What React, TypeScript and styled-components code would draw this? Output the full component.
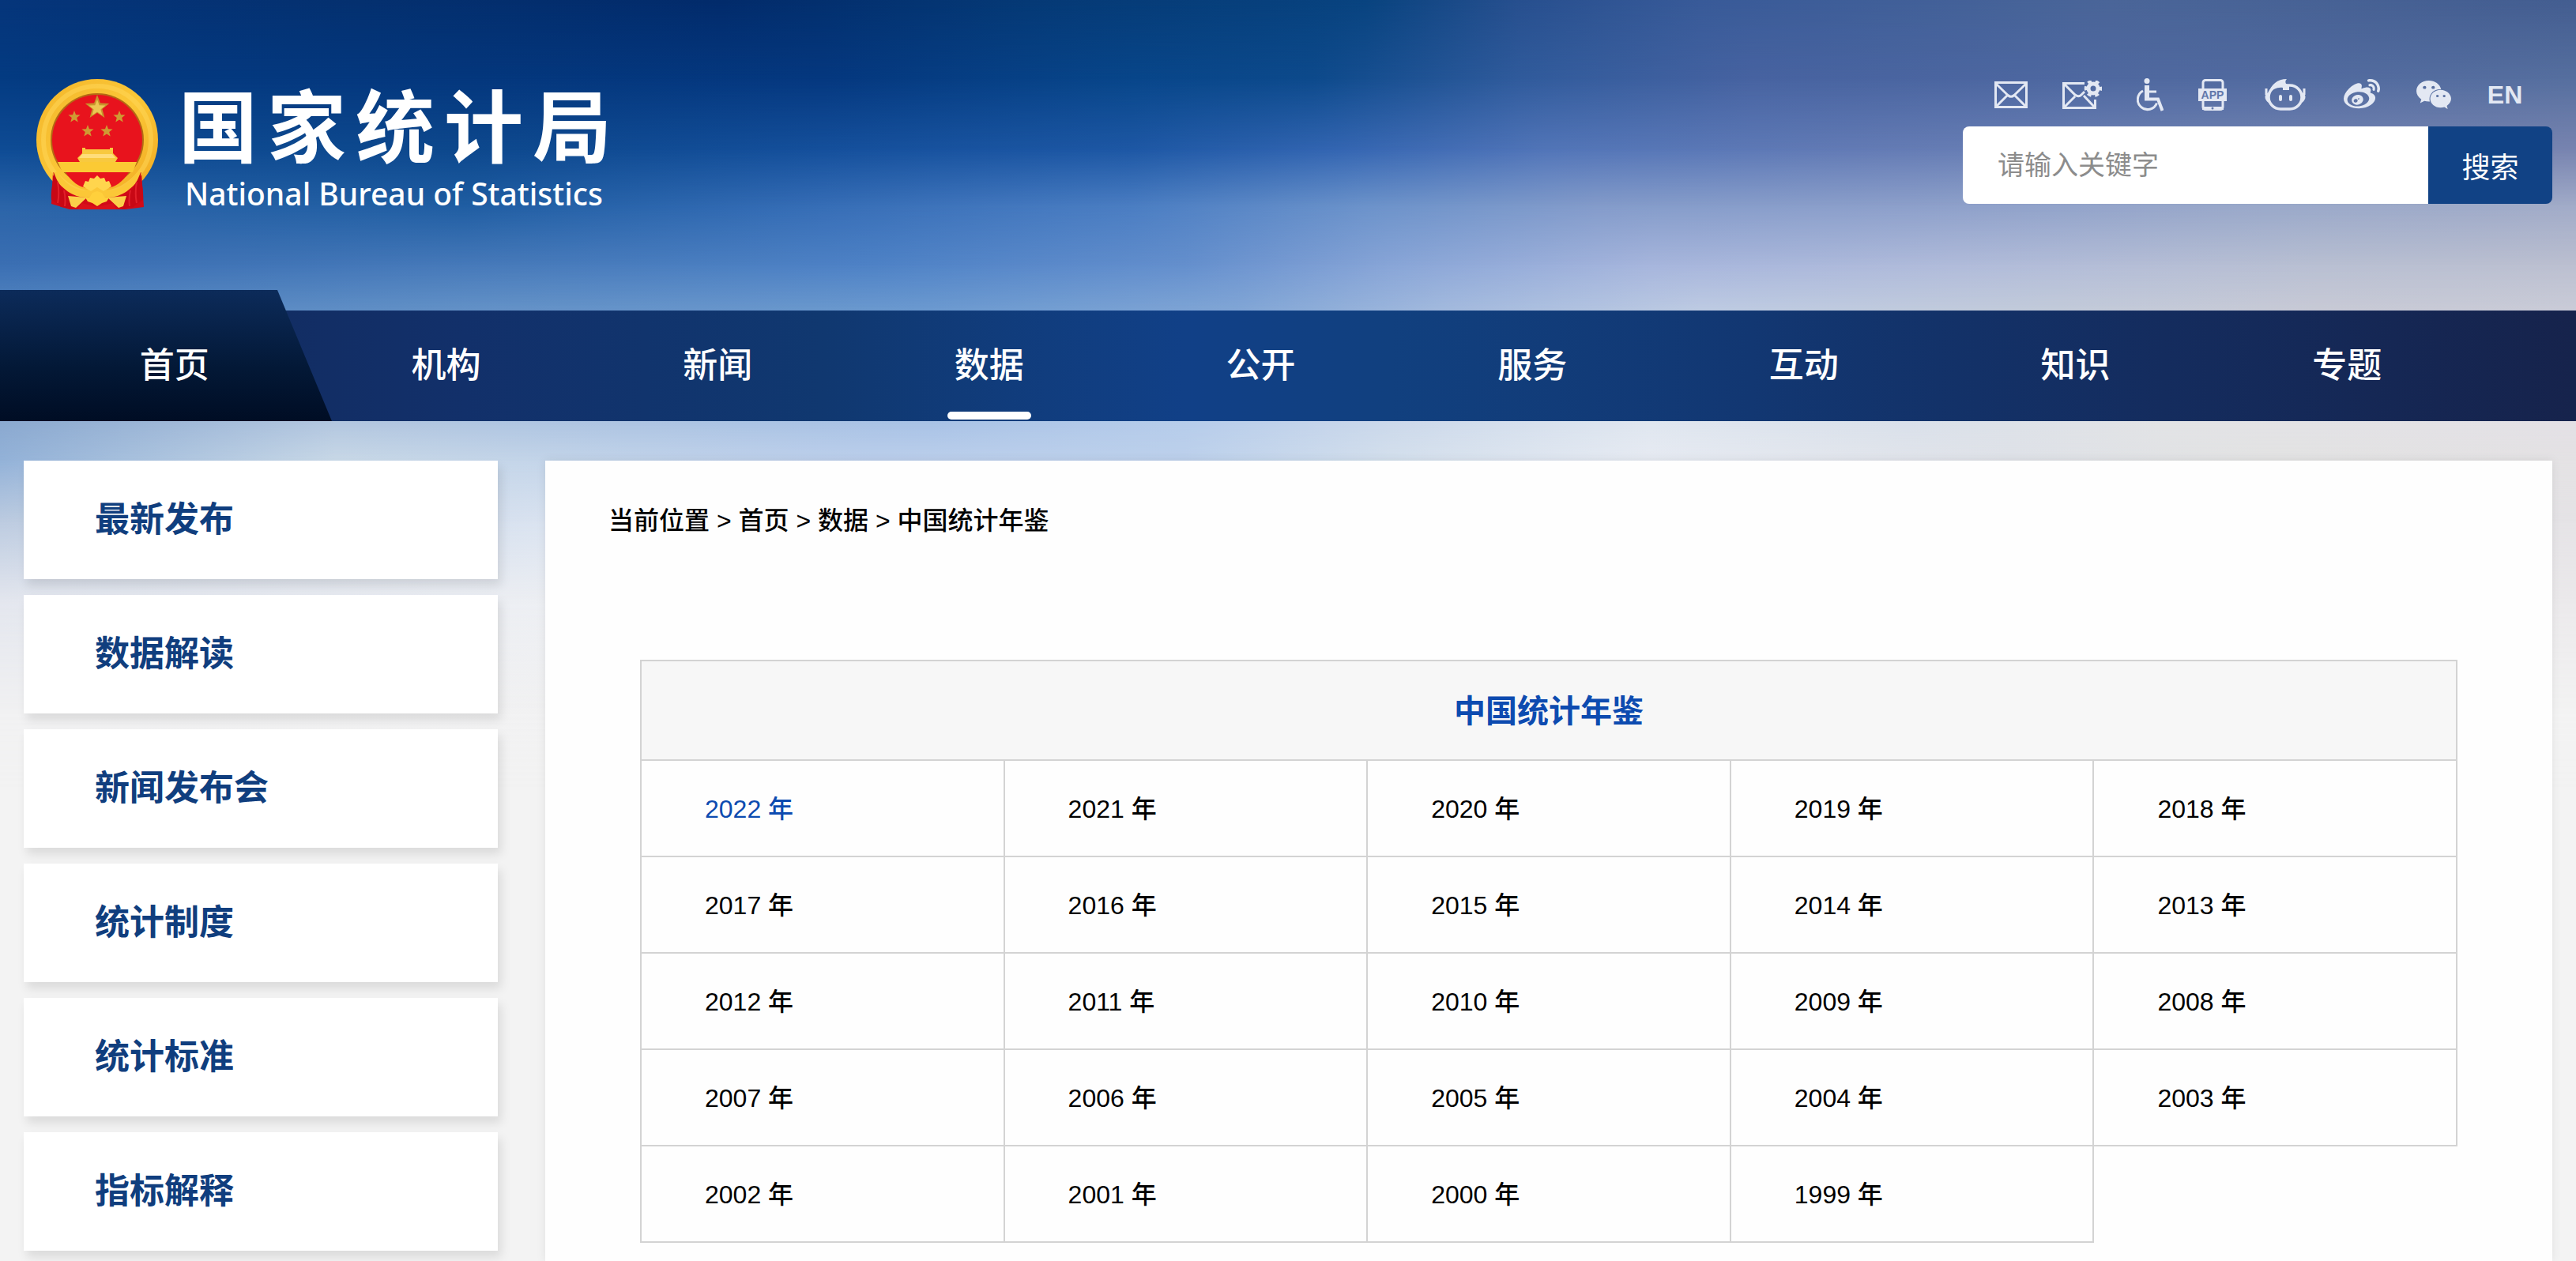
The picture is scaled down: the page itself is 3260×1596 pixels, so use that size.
import React from "react";
import styled, { createGlobalStyle } from "styled-components";
import { FaWeibo, FaWeixin } from "react-icons/fa";

const GlobalStyle = createGlobalStyle`
  *, *::before, *::after { box-sizing: border-box; }
  body {
    margin: 0;
    background: #f3f3f3;
    font-family: "Liberation Sans", "Noto Sans CJK SC", sans-serif;
    color: #000;
  }
  a { color: inherit; text-decoration: none; }
  ul { list-style: none; margin: 0; padding: 0; }
`;

/* Sky: rows of horizontal gradients, each one fading into the next one down */
const skyRows: { y: number; stops: string }[] = [
  { y: 0, stops: "#05357a 0%, #04306f 14%, #022b6b 28%, #053975 40%, #08437f 53%, #274f8e 59%, #385a98 66%, #4a6598 82%, #435d90 100%" },
  { y: 100, stops: "#043b82 0%, #04377d 18%, #05387f 32%, #08468a 44%, #0d4a8c 51%, #305b9c 59%, #4763a1 68%, #5069a0 84%, #566f9f 100%" },
  { y: 190, stops: "#0f4c95 0%, #0d488d 18%, #15509c 32%, #1e58a5 44%, #3466b2 52%, #5275b8 60%, #637bb5 72%, #7083b3 86%, #7884b0 100%" },
  { y: 260, stops: "#2b64a8 0%, #1f5da2 18%, #366db6 32%, #4a7dc2 44%, #6b92ca 53%, #839bca 62%, #8c9fca 74%, #99a8c9 88%, #a1abc8 100%" },
  { y: 335, stops: "#3b6fb3 0%, #477aba 20%, #4e82c6 34%, #648fcd 46%, #88a5d7 54%, #a6b5dc 64%, #b0bbda 76%, #b8bfd2 90%, #bbbfd0 100%" },
  { y: 393, stops: "#5486c1 0%, #6593c8 20%, #6c9ad0 36%, #81a6d6 48%, #a3bade 56%, #becbe3 66%, #c3cbda 80%, #c8cad6 90%, #caccd8 100%" },
  { y: 533, stops: "#8aa8cf 0%, #b2c6df 13%, #a8c2e5 36%, #b6ccea 46%, #cbd8ea 54%, #dfe6ef 64%, #d9e0ea 74%, #e2e3e5 84%, #e3e0e5 100%" },
  { y: 583, stops: "#93b2d8 0%, #c8d8e7 13%, #bccfec 34%, #bdd1ec 46%, #d4e0ed 54%, #e7ebf3 64%, #dfe2e8 78%, #e3e3e3 88%, #e4e2e4 100%" },
  { y: 660, stops: "#bccbe0 0%, #dbe4f1 22%, #dde5f0 60%, #e5e3e6 100%" },
  { y: 760, stops: "#e3e6ee 0%, #edeff3 22%, #eeeff2 60%, #ebe9eb 100%" },
  { y: 900, stops: "#f1f1f2 0%, #f3f3f3 100%" },
];

const Page = styled.div`
  position: relative;
  isolation: isolate;
  display: flex;
  flex-direction: column;
  min-height: 100vh;
`;

const Sky = styled.div`
  position: absolute;
  inset: 0 0 auto;
  height: 1000px;
  z-index: -1;
  overflow: hidden;
`;

const SkyRow = styled.div<{ $stops: string; $from: number; $to: number }>`
  position: absolute;
  inset: 0;
  background: linear-gradient(90deg, ${(p) => p.$stops});
  mask-image: linear-gradient(180deg, #000 ${(p) => p.$from}px, transparent ${(p) => p.$to}px);
`;

const Header = styled.header`
  display: flex;
  justify-content: space-between;
  align-items: flex-start;
  padding: 100px 30px 123px 46px;
`;

const Brand = styled.a`
  display: flex;
  gap: 26px;
  color: #fff;
`;

const BrandText = styled.div`
  display: flex;
  flex-direction: column;
  gap: 10px;
`;

const BrandName = styled.div`
  display: flex;
  gap: 12px;
  font-size: 100px;
  font-weight: 700;
  line-height: 110px;
  font-family: "Noto Sans CJK SC", sans-serif;
`;

const BrandLatin = styled.div`
  padding-left: 8px;
  font-family: "Noto Sans", sans-serif;
  font-size: 39px;
  font-weight: 500;
  line-height: 50px;
`;

const Tools = styled.div`
  display: flex;
  flex-direction: column;
  gap: 20px;
`;

const IconRow = styled.nav`
  display: flex;
  justify-content: flex-end;
  align-items: center;
  gap: 44px;
  height: 40px;
  padding-right: 38px;
  color: #e3e8f3;
  font-size: 32px;
  font-weight: 700;
`;

const IconLink = styled.a<{ $width: number }>`
  display: flex;
  justify-content: center;
  width: ${(p) => p.$width}px;
  svg { display: block; flex: none; }
`;

const Search = styled.form`
  display: flex;
  width: 746px;
  height: 98px;
  border-radius: 8px;
  overflow: hidden;
`;

const SearchInput = styled.input`
  flex: 1;
  min-width: 0;
  border: 0;
  padding: 0 44px;
  background: #fff;
  font: inherit;
  font-size: 34px;
  outline: none;
  &::placeholder { color: #8c8c8c; opacity: 1; }
`;

const SearchButton = styled.button`
  width: 157px;
  border: 0;
  background: #114285;
  color: #fff;
  font: inherit;
  font-size: 36px;
`;

const NavBar = styled.nav`
  position: relative;
  background: linear-gradient(90deg, #12295a 0%, #12306a 18%, #103870 32%, #114087 46%, #11407f 54%, #123772 68%, #142c5e 84%, #16234c 100%);
  &::before {
    content: "";
    position: absolute;
    left: 0;
    bottom: 0;
    width: 420px;
    height: 166px;
    background: linear-gradient(180deg, #0c2b5a 0%, #031836 60%, #000d24 100%);
    clip-path: polygon(0 0, 351px 0, 100% 100%, 0 100%);
  }
`;

const NavList = styled.ul`
  position: relative;
  display: grid;
  grid-template-columns: repeat(9, 1fr);
  padding: 0 118px 0 49px;
`;

const NavLink = styled.a<{ $active: boolean }>`
  position: relative;
  display: block;
  text-align: center;
  font-size: 44px;
  font-weight: 500;
  line-height: 140px;
  color: #fff;
  &::after {
    content: "";
    display: ${(p) => (p.$active ? "block" : "none")};
    position: absolute;
    left: calc(50% - 53px);
    bottom: 2px;
    width: 106px;
    height: 10px;
    border-radius: 5px;
    background: #fff;
  }
`;

const Main = styled.main`
  flex: 1;
  display: flex;
  gap: 60px;
  padding: 50px 30px 0;
`;

const Sidebar = styled.aside`
  flex: none;
  width: 600px;
`;

const SideList = styled.ul`
  display: flex;
  flex-direction: column;
  gap: 20px;
`;

const SideLink = styled.a`
  display: block;
  padding-left: 90px;
  background: #fff;
  box-shadow: 4px 8px 12px rgba(0, 0, 0, 0.1);
  color: #103e7e;
  font-size: 44px;
  font-weight: 700;
  line-height: 150px;
`;

const Panel = styled.section`
  flex: 1;
  padding: 52px 120px 22px;
  background: #fefefe;
  box-shadow: 0 0 12px rgba(0, 0, 0, 0.08);
`;

const Breadcrumb = styled.nav`
  margin: 0 0 152px -40px;
  font-size: 32px;
  font-weight: 500;
  line-height: 48px;
`;

const YearTable = styled.table`
  width: 100%;
  table-layout: fixed;
  border-collapse: collapse;
  font-size: 32px;
  font-weight: 500;
`;

const TitleCell = styled.th`
  height: 126px;
  padding: 0 0 4px;
  border: 2px solid #d3d3d3;
  background: #f7f7f7;
  color: #0d4bb0;
  font-size: 40px;
  font-weight: 700;
`;

const YearCell = styled.td`
  height: 122px;
  padding: 0 0 4px 80px;
  border: 2px solid #d3d3d3;
`;

const YearLink = styled.a<{ $current: boolean }>`
  color: ${(p) => (p.$current ? "#0d4bb0" : "#000")};
`;

const starPoints = (cx: number, cy: number, r: number) =>
  Array.from({ length: 10 }, (_, i) => {
    const a = (Math.PI / 5) * i - Math.PI / 2;
    const d = i % 2 ? r * 0.42 : r;
    return `${(cx + d * Math.cos(a)).toFixed(1)},${(cy + d * Math.sin(a)).toFixed(1)}`;
  }).join(" ");

const Emblem = () => (
  <svg width="154" height="165" viewBox="0 0 154 165" aria-hidden="true">
    <defs>
      <linearGradient id="gold" x1="0" y1="0" x2="1" y2="1">
        <stop offset="0" stopColor="#f3b62b" />
        <stop offset=".5" stopColor="#fbc737" />
        <stop offset="1" stopColor="#f0a820" />
      </linearGradient>
    </defs>
    <circle cx="77" cy="77" r="77" fill="url(#gold)" />
    <circle cx="77" cy="77" r="68" fill="none" stroke="#ffd75a" strokeWidth="6" opacity=".5" />
    <circle cx="77" cy="77" r="59" fill="#b46a14" />
    <circle cx="77" cy="77" r="57" fill="#e8131d" />
    <polygon points={starPoints(77, 36, 16)} fill="#c8942c" />
    <polygon points={starPoints(77, 37, 11)} fill="#ecc653" />
    {[[48, 48], [105, 48], [65, 66], [89, 66]].map(([x, y]) => (
      <polygon key={`${x}-${y}`} points={starPoints(x, y, 8)} fill="#cf9a33" />
    ))}
    <path d="M58 87h4v2h31v-2h4v7l6 6-3 5H55l-3-5 6-6z" fill="#f8c93f" />
    <path d="M58 95h38l4 5H54z" fill="#ffdd7a" />
    <path d="M27 105h100l-5 13H33z" fill="#fbca34" />
    <path d="M21 118c7 8 16 20 28 26h56c12-6 21-18 28-26l3 44-23 3H42l-23-7z" fill="#d20a17" />
    <path d="M37 118h80c-7 12-18 19-27 20l-6-8H70l-6 8c-9-1-20-8-27-20z" fill="#e8131d" />
    <path d="M26 117c12 18 25 24 36 24l15-4 15 4c11 0 24-6 36-24l6 3c-11 19-27 30-43 30-6 0-9-3-14-6-5 3-8 6-14 6-16 0-32-11-43-30z" fill="#fbc737" />
    <path d="M59 136l3-7 4 1 2-5 5 1 4-4 4 4 5-1 2 5 4-1 3 7-10 6-8-5-8 5z" fill="#ffd54d" />
    <path d="M22 118c-1 15-4 23-3 35l8 5 4 4 8 1 7 2-6-17c-8-8-14-19-18-30z" fill="#c80815" />
    <path d="M132 118c1 15 4 23 3 35l-8 5-4 4-8 1-7 2 6-17c8-8 14-19 18-30z" fill="#c80815" />
    <path d="M27 130c2 12 2 18 0 27M35 141c2 8 2 12 1 20M127 130c-2 12-2 18 0 27M119 141c-2 8-2 12-1 20" stroke="#e2202a" strokeWidth="2" fill="none" />
    <path d="M40 148l24 2-14 13-6-2zM114 148l-24 2 14 13 6-2z" fill="#fbcf4a" />
    <path d="M62 150l6-1 3-5 6-2 6 2 3 5 6 1-3 5-6 2-6 4-6-4-6-2z" fill="#ffd03c" />
    <path d="M57 157l20 5 20-5 4 8H53z" fill="#d9101b" />
  </svg>
);

const MailIcon = () => (
  <svg width="42" height="34" viewBox="0 0 42 34" fill="none" stroke="currentColor" strokeWidth="3" aria-hidden="true">
    <rect x="1.5" y="1.5" width="39" height="31" />
    <path d="M2 3l15 14.500q4 3.500 8 0L40 3M2 32l14-14M40 32L26 18" />
  </svg>
);

const MailGearIcon = () => (
  <svg width="50" height="36" viewBox="0 0 50 36" fill="none" stroke="currentColor" strokeWidth="3" aria-hidden="true">
    <path d="M28 3.500H1.500v31h40V24M2 4l14 14q4.500 3.500 8 0l4-4M2 34l14-14M41 34L27 19" />
    <circle cx="39" cy="10" r="6" strokeWidth="5" />
    <circle cx="39" cy="10" r="9.500" strokeWidth="3.500" strokeDasharray="5 4.950" strokeDashoffset="2.500" />
  </svg>
);

const WheelchairIcon = () => (
  <svg width="34" height="42" viewBox="0 0 34 42" fill="none" stroke="currentColor" aria-hidden="true">
    <circle cx="13" cy="3.500" r="3.500" fill="currentColor" stroke="none" />
    <path d="M13 9v17" strokeWidth="6" />
    <path d="M13 17h12" strokeWidth="3" />
    <path d="M10 26.500h17L32.500 41" strokeWidth="4" />
    <path d="M8 16a12.500 12.500 0 1 0 17.500 15.500" strokeWidth="3" />
  </svg>
);

const AppIcon = () => (
  <svg width="36" height="40" viewBox="0 0 36 40" aria-hidden="true">
    <rect x="6" y="1.500" width="25" height="37" rx="3" fill="none" stroke="currentColor" strokeWidth="3" />
    <path d="M5 35h27v4H5z" fill="currentColor" />
    <rect y="12" width="36" height="16" fill="currentColor" />
    <text x="18" y="25" textAnchor="middle" fontSize="14" fontWeight="700" fill="#6278ab">APP</text>
    <circle cx="18" cy="37" r="1.500" fill="#6278ab" />
  </svg>
);

const RobotIcon = () => (
  <svg width="52" height="40" viewBox="0 0 52 40" aria-hidden="true">
    <rect x="5" y="8" width="42" height="30" rx="15" fill="none" stroke="currentColor" strokeWidth="3.500" />
    <path d="M5 18C8 7 16 0 28 0c-2 2-2 4-1 6l4 2v6h-8v-3c-7-1-13 2-18 7z" fill="currentColor" />
    <path d="M2 12v8M50 12v8" stroke="currentColor" strokeWidth="3" />
    <path d="M5 17c-6 2-6 9 0 13zM47 17c6 2 6 9 0 13z" fill="currentColor" />
    <rect x="18" y="20" width="4" height="8" rx="2" fill="currentColor" />
    <rect x="31" y="20" width="4" height="8" rx="2" fill="currentColor" />
  </svg>
);

const iconLinks = [
  { label: "邮箱", width: 42, icon: <MailIcon /> },
  { label: "邮件订阅", width: 50, icon: <MailGearIcon /> },
  { label: "无障碍", width: 34, icon: <WheelchairIcon /> },
  { label: "客户端", width: 36, icon: <AppIcon /> },
  { label: "智能问答", width: 60, icon: <RobotIcon /> },
  { label: "微博", width: 46, icon: <FaWeibo size={46} /> },
  { label: "微信", width: 48, icon: <FaWeixin size={46} /> },
];

const navItems = ["首页", "机构", "新闻", "数据", "公开", "服务", "互动", "知识", "专题"];
const sideItems = ["最新发布", "数据解读", "新闻发布会", "统计制度", "统计标准", "指标解释"];
const years = Array.from({ length: 24 }, (_, i) => 2022 - i);
const yearRows = Array.from({ length: 5 }, (_, r) => years.slice(r * 5, r * 5 + 5));

export default function App() {
  return (
    <>
      <GlobalStyle />
      <Page>
        <Sky>
          {skyRows
            .map((row, i) => (
              <SkyRow key={row.y} $stops={row.stops} $from={row.y} $to={skyRows[i + 1]?.y ?? 1000} />
            ))
            .reverse()}
        </Sky>
        <Header>
          <Brand href="#">
            <Emblem />
            <BrandText>
              <BrandName>
                {[..."国家统计局"].map((c) => (
                  <span key={c}>{c}</span>
                ))}
              </BrandName>
              <BrandLatin>National Bureau of Statistics</BrandLatin>
            </BrandText>
          </Brand>
          <Tools>
            <IconRow>
              {iconLinks.map((l) => (
                <IconLink key={l.label} href="#" aria-label={l.label} $width={l.width}>
                  {l.icon}
                </IconLink>
              ))}
              <IconLink href="#" $width={44}>EN</IconLink>
            </IconRow>
            <Search onSubmit={(e) => e.preventDefault()}>
              <SearchInput type="text" aria-label="请输入关键字" placeholder="请输入关键字" />
              <SearchButton type="submit">搜索</SearchButton>
            </Search>
          </Tools>
        </Header>
        <NavBar>
          <NavList>
            {navItems.map((n) => (
              <li key={n}>
                <NavLink href="#" $active={n === "数据"}>{n}</NavLink>
              </li>
            ))}
          </NavList>
        </NavBar>
        <Main>
          <Sidebar>
            <SideList>
              {sideItems.map((s) => (
                <li key={s}>
                  <SideLink href="#">{s}</SideLink>
                </li>
              ))}
            </SideList>
          </Sidebar>
          <Panel>
            <Breadcrumb>
              当前位置 &gt; <a href="#">首页</a> &gt; <a href="#">数据</a> &gt; <a href="#">中国统计年鉴</a>
            </Breadcrumb>
            <YearTable>
              <thead>
                <tr>
                  <TitleCell colSpan={5}>中国统计年鉴</TitleCell>
                </tr>
              </thead>
              <tbody>
                {yearRows.map((row) => (
                  <tr key={row[0]}>
                    {row.map((y) => (
                      <YearCell key={y}>
                        <YearLink href="#" $current={y === 2022}>{`${y} 年`}</YearLink>
                      </YearCell>
                    ))}
                  </tr>
                ))}
              </tbody>
            </YearTable>
          </Panel>
        </Main>
      </Page>
    </>
  );
}
